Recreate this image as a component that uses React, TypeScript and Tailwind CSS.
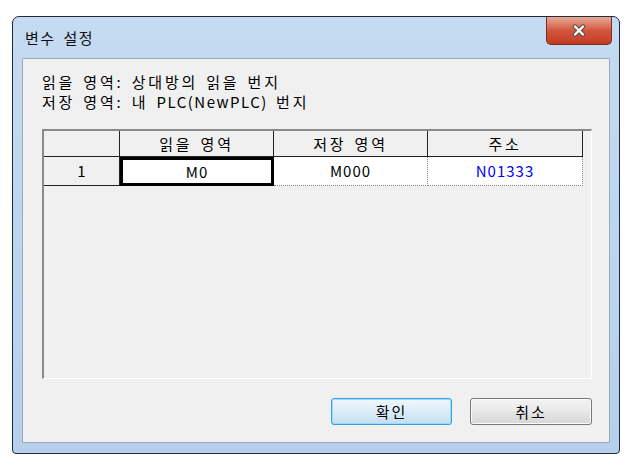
const CloseGlyph = () => (
  <svg width="16" height="13" viewBox="0 0 16 13">
    <path d="M4 2.5 L12 10.5 M12 2.5 L4 10.5" stroke="#5a4a48" strokeWidth="4.4" strokeLinecap="round" />
    <path d="M4 2.5 L12 10.5 M12 2.5 L4 10.5" stroke="#ffffff" strokeWidth="2.4" strokeLinecap="round" />
  </svg>
);

const App = () => {
  return (
    <div className="w-[631px] h-[466px] bg-white pt-[16px] pl-[12px] font-['Noto_Sans_CJK_KR','Noto_Sans',sans-serif] text-black tracking-[2.8px] [word-spacing:2px]">
      {/* window frame */}
      <div className="w-[608px] h-[438px] rounded-t-[7px] rounded-b-[4px] border border-[#1f2a36] bg-gradient-to-b from-[#c5dbf2] via-[#bcd5ef] to-[#b6d0ec] flex flex-col px-[9px] pb-[10px]">
        {/* title bar */}
        <div className="h-[41px] flex items-start justify-between -mr-[2px]">
          <div className="h-[41px] flex items-center pl-[3px] text-[15px] leading-[20px] text-[#111] tracking-[1.5px] [word-spacing:3px]">
            변수 설정
          </div>
          <div className="w-[66px] h-[28px] rounded-b-[5px] border border-t-0 border-[#7c3020] bg-gradient-to-b from-[#e6a898] via-[#d2563d] to-[#c33b22] flex items-center justify-center">
            <CloseGlyph />
          </div>
        </div>

        {/* client area */}
        <div className="flex-1 border border-[#9cabbb] bg-[#f0f0f0] flex flex-col pl-[19px] pr-[17px] pt-[13px]">
          <div className="text-[15px] leading-[20px]">
            <div>읽을 영역: 상대방의 읽을 번지</div>
            <div>
              저장 영역: 내 <span className="tracking-[1.5px]">PLC(NewPLC)</span> 번지
            </div>
          </div>

          {/* grid panel */}
          <div className="mt-[17px] w-[550px] h-[250px] border-t-2 border-l-2 border-[#8a8a8a] border-r border-b border-r-white border-b-white bg-[#f0f0f0]">
            <div className="grid grid-cols-[76px_154px_154px_155px] text-[15px] leading-[20px]">
              {/* header */}
              <div className="h-[26px] border-r border-b border-[#222] bg-[#f0f0f0]" />
              <div className="h-[26px] border-r border-b border-[#222] flex items-center justify-center">읽을 영역</div>
              <div className="h-[26px] border-r border-b border-[#222] flex items-center justify-center">저장 영역</div>
              <div className="h-[26px] border-r border-b border-[#222] flex items-center justify-center">주소</div>
              {/* row 1 */}
              <div className="h-[29px] border-r border-b border-[#222] flex items-center justify-center tracking-normal">1</div>
              <div className="h-[29px] border-[3px] border-black bg-white flex items-center justify-center tracking-[1px]">M0</div>
              <div className="h-[29px] border-r border-b border-dotted border-[#888] bg-white flex items-center justify-center tracking-[1px]">M000</div>
              <div className="h-[29px] border-r border-b border-dotted border-[#888] bg-white flex items-center justify-center text-[#0000ff] tracking-[1px]">N01333</div>
            </div>
          </div>

          {/* buttons */}
          <div className="mt-[19px] flex justify-end gap-[18px] text-[15px] tracking-[2px]">
            <div className="w-[121px] h-[27px] rounded-[3px] border border-[#36a0e0] shadow-[inset_0_0_0_1px_#9fdcfb] bg-gradient-to-b from-[#eef7fc] via-[#dcedf8] to-[#c3def0] flex items-center justify-center leading-[20px]">
              확인
            </div>
            <div className="w-[122px] h-[27px] rounded-[3px] border border-[#777] shadow-[inset_0_0_0_1px_#fafafa] bg-gradient-to-b from-[#f4f4f4] via-[#e8e8e8] to-[#d6d6d6] flex items-center justify-center leading-[20px]">
              취소
            </div>
          </div>
        </div>
      </div>
    </div>
  );
};

export default App;
